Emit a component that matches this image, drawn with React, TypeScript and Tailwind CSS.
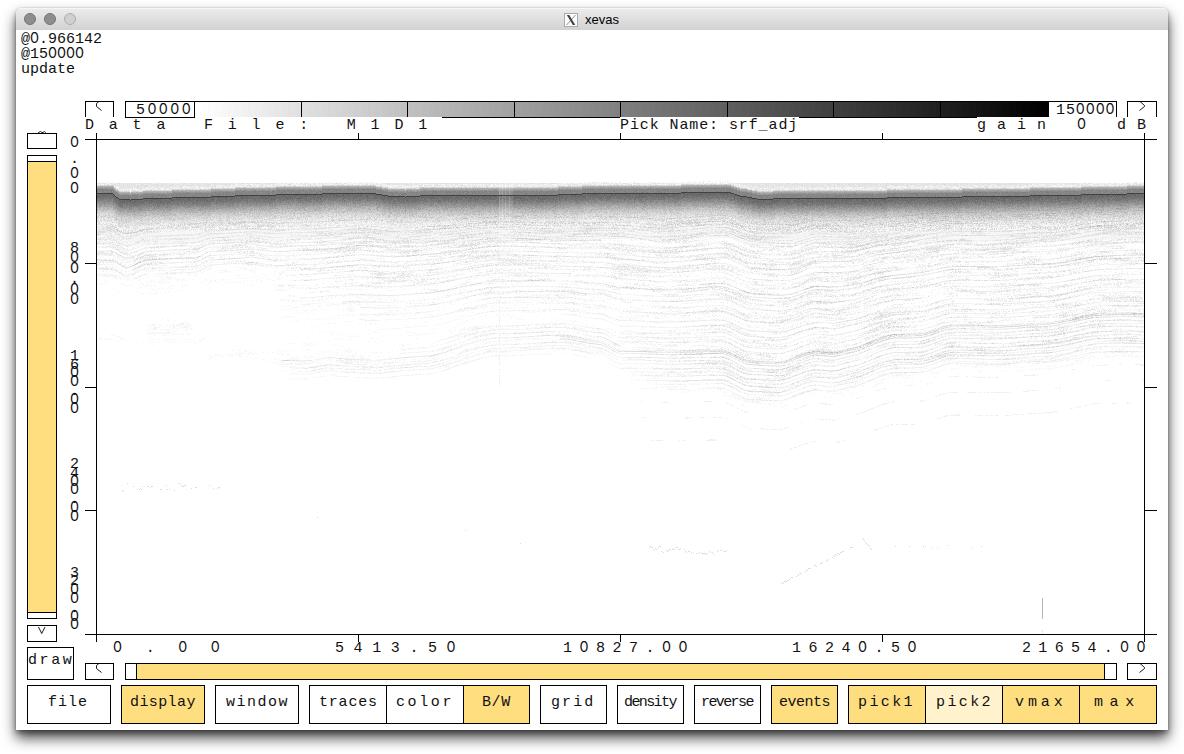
import React from "react";

type Pt = [number, number];

/* ---------- deterministic noise ---------- */
function hash(a: number, b: number): number {
  let h = (Math.imul(a | 0, 374761393) + Math.imul(b | 0, 668265263)) | 0;
  h = Math.imul(h ^ (h >>> 13), 1274126177);
  h ^= h >>> 16;
  return (h >>> 0) / 4294967296;
}
function noise(x: number, y: number): number {
  const xi = Math.floor(x);
  const yi = Math.floor(y);
  const fx = x - xi;
  const fy = y - yi;
  const a = hash(xi, yi) * (1 - fx) + hash(xi + 1, yi) * fx;
  const b = hash(xi, yi + 1) * (1 - fx) + hash(xi + 1, yi + 1) * fx;
  return a * (1 - fy) + b * fy;
}
function curve(points: Pt[], x: number): number {
  if (x <= points[0][0]) return points[0][1];
  for (let i = 1; i < points.length; i++) {
    if (x <= points[i][0]) {
      const [x0, y0] = points[i - 1];
      const [x1, y1] = points[i];
      const f = (x - x0) / (x1 - x0);
      return y0 + (y1 - y0) * f * f * (3 - 2 * f) * 0.5 + (y1 - y0) * f * 0.5;
    }
  }
  return points[points.length - 1][1];
}
const clamp = (v: number) => Math.max(0, Math.min(1, v));

/* ---------- reflectors ---------- */
const seabed: Pt[] = [
  [97, 193.4], [111, 193], [119, 198.6], [130, 199.5], [150, 198], [200, 196.8], [250, 195], [300, 194],
  [350, 192.8], [368, 192.6], [395, 196.3], [405, 196.5], [425, 195.2], [500, 195], [552, 195], [562, 194],
  [612, 192.6], [665, 193.4], [690, 192], [727, 191.6], [742, 196], [762, 199.2], [775, 198.4], [835, 198],
  [900, 197.4], [1000, 196], [1080, 194.5], [1144, 193.2],
];
const middle: Pt[] = [
  [97, 260], [112, 260], [126, 267], [146, 259], [195, 258], [210, 251], [252, 248], [276, 251.5], [310, 250],
  [360, 244.5], [394, 248], [496, 238], [610, 240], [660, 243], [724, 239], [752, 248], [790, 250], [815, 243],
  [850, 243], [880, 236], [960, 227], [1050, 225], [1100, 217], [1144, 216],
];
const deep: Pt[] = [
  [97, 366], [128, 371], [190, 367], [218, 352], [252, 352], [282, 360], [306, 361], [330, 357], [377, 360],
  [428, 355], [496, 337], [565, 335], [600, 340], [620, 350], [722, 350], [748, 360], [780, 362], [815, 351],
  [833, 352], [850, 348], [895, 334], [920, 333], [950, 325], [985, 325], [1045, 323], [1095, 313], [1144, 313],
];
/* [level between reflectors, strength, first x, last x] */
const horizons: [number, number, number, number][] = [
  [0.5, 0.05, 97, 1144], [0.62, 0.05, 97, 1144], [0.68, 0.06, 97, 1144], [0.75, 0.05, 97, 1144],
  [0.8, 0.04, 97, 1144], [0.86, 0.06, 97, 1144], [0.92, 0.04, 97, 1144],
  [1, 0.1, 97, 600], [1.04, 0.05, 97, 1144], [1.08, 0.07, 97, 1144], [1.13, 0.05, 97, 1144],
  [1.17, 0.08, 300, 1144], [1.22, 0.05, 300, 1144], [1.27, 0.06, 300, 1144], [1.35, 0.05, 300, 1144],
  [1.4, 0.11, 700, 1144], [1.43, 0.08, 300, 1144], [1.49, 0.05, 300, 1144], [1.54, 0.07, 360, 1144],
  [1.6, 0.05, 360, 1144], [1.65, 0.06, 360, 1144], [1.73, 0.07, 380, 1144], [1.78, 0.07, 560, 1144],
  [1.84, 0.06, 620, 1144], [1.88, 0.06, 390, 1144],
  [1.92, 0.06, 400, 1144], [1.96, 0.07, 400, 620], [2, 0.12, 282, 1144], [2.025, 0.12, 560, 1144],
  [2.06, 0.1, 560, 1144], [2.12, 0.07, 290, 1144], [2.17, 0.06, 290, 1144], [2.22, 0.08, 290, 1144],
  [2.3, 0.08, 290, 1144], [2.36, 0.06, 630, 1144], [2.42, 0.09, 630, 1144], [2.46, 0.07, 850, 1144],
  [2.5, 0.1, 630, 1144], [2.56, 0.06, 630, 1144], [2.64, 0.08, 630, 1144],
];

function envelope(x: number, y: number, seg: number): number {
  const left = clamp((285 - x) / 14);
  const right = clamp((x - 600) / 130);
  const mid = 1 - left - right;
  let l = clamp((305 - y) / 50) * 0.9;
  if (x > 140 && x < 200) l += 0.55 * clamp(1 - Math.abs(y - 325) / 12) * clamp((200 - x) / 12) * clamp((x - 140) / 12);
  l += 0.42 * clamp(1 - Math.abs(seg - (x > 205 ? 2.02 : 1.75)) / 0.14);
  let m = clamp((342 - y) / 62) * 0.9;
  m += 0.6 * clamp(1 - Math.abs(seg - 2.08) / 0.38);
  const r = seg < 2.45 ? 0.95 : 0.95 * clamp((2.9 - seg) / 0.45);
  return clamp(l) * left + clamp(m) * Math.max(0, mid) + r * right;
}

function buildSection(): { fill: string; d: string }[] {
  const levels: string[][] = Array.from({ length: 32 }, () => []);
  const width = 1047;
  const top = 181;
  const bottom = 450;
  const s: number[] = [];
  const m: number[] = [];
  const d: number[] = [];
  for (let i = 0; i < width; i++) {
    const x = 97 + i;
    s.push(curve(seabed, x));
    m.push(curve(middle, x) + 0.6 * Math.sin(x / 17));
    d.push(curve(deep, x) + 0.5 * Math.sin(x / 13));
  }
  for (let y = top; y < bottom; y++) {
    let start = 0;
    let current = -1;
    for (let i = 0; i <= width; i++) {
      let level = -1;
      if (i < width) {
        const x = 97 + i;
        const dy = y - Math.round(s[i]);
        const grain = hash(i, y) - 0.5;
        let dark = 0;
        if (dy < 0) {
          if (dy >= -7) dark = 0.3 + 0.18 * clamp((dy + 7) / 3) + grain * 0.05;
          else if (y >= 183) {
            if (dy === -8) dark = 0.16 + grain * 0.12;
            else dark = 0.1 + grain * 0.05;
            if (dy >= -11 && dy < -8) dark = 0.07 + grain * 0.1;
          } else dark = dy > -12 && grain > 0.15 ? 0.06 : 0;
        } else if (dy === 0) {
          dark = 0.74;
        } else {
          const edge = 0.44 * Math.exp(-Math.pow(dy / 15, 2)) + 0.15 * Math.exp(-Math.pow(dy / 29, 1.8));
          dark = edge + grain * (dy < 34 ? 0.09 : 0);
          const seg =
            y < m[i] ? (y - s[i]) / (m[i] - s[i]) : y < d[i] ? 1 + (y - m[i]) / (d[i] - m[i]) : 2 + (y - d[i]) / 60;
          const depth = seg < 1 ? seg * 55 : seg < 2 ? 55 + (seg - 1) * 105 : 160 + (seg - 2) * 60;
          const env = envelope(x, y, seg);
          const streak = noise(i / 14, depth * 0.85);
          const coarse = noise(i / 60 + 90, depth * 0.16 + 40);
          const shallow = 0.012 + 0.014 * clamp((75 - dy) / 30);
          const tex = (streak * 0.7 + coarse * 0.3 - 0.54) * 0.25 + grain * 0.13 + shallow;
          const fade = clamp((dy - 8) / 30);
          dark += Math.min(0.12, Math.max(0, tex)) * env * fade;
          for (const [at, strength, x0, x1] of horizons) {
            if (x < x0 || x > x1 || env < 0.08) continue;
            const scale = seg < 1 ? 55 : seg < 2 ? 105 : 60;
            const dist = Math.abs(seg - at) * scale;
            if (dist < 0.8) dark += strength * (1.1 - dist) * clamp(env * 1.4) * (0.4 + noise(i / 22, at * 80)) * (1 + grain * 0.6);
          }
          if (seg > 2.7 && x > 640) {
            for (const k of [2.86, 3.12, 3.5, 4.3]) {
              if (k > 4 && x < 940) continue;
              if (Math.abs(seg - k) * 60 < 0.55 && noise(i / 8, k * 9) > 0.5 && grain > -0.15) dark += 0.05;
            }
          }
          if (dy > 45 && dark < 0.022) dark = 0;
        }
        if (x >= 499 && x <= 512 && dy !== 0) {
          if (x === 499 || x === 502 || x === 505 || x === 509) dark *= 0.76;
          else dark *= 0.9;
          if (x === 499 && y > 290 && y < 385 && hash(i, y) > 0.45) dark = 0.05;
        }
        level = Math.round(clamp(dark) * 31);
      }
      if (level !== current) {
        if (current > 0) levels[current].push(`M${start} ${y - 138.5}h${i - start}`);
        start = i;
        current = level;
      }
    }
  }
  return levels
    .map((runs, i) => {
      const g = Math.round(255 - (i * 255) / 31);
      return { fill: `rgb(${g},${g},${g})`, d: runs.join("") };
    })
    .filter((l) => l.d.length > 0);
}
const section = buildSection();

function buildSpecks(): string {
  const out: string[] = [];
  const put = (x: number, y: number) => out.push(`M${Math.round(x) - 97} ${Math.round(y) - 138.5}h1`);
  for (let i = 0; i < 100; i++) if (hash(i, 901) > 0.6) put(122 + i, 482 + hash(Math.floor(i / 5), 902) * 8 + hash(i, 912) * 2);
  for (let i = 0; i < 78; i++) if (hash(i, 903) > 0.3) put(649 + i, 545 + i * 0.05 + hash(Math.floor(i / 4), 904) * 5 + hash(i, 914) * 2);
  for (let i = 0; i < 75; i++) if (hash(Math.floor(i / 3), 905) > 0.45) put(781 + i, 582 - i * 0.52 + hash(i, 906) * 2);
  for (let i = 0; i < 10; i++) put(862 + i, 538 + i * 1.2);
  for (let i = 0; i < 120; i++) if (hash(i, 907) > 0.93) put(870 + i, 545 + hash(i, 908) * 3);
  put(317, 517);
  put(465, 530);
  put(520, 543);
  return out.join("");
}
const specks = buildSpecks();

/* ---------- text ---------- */
function Mono({ text }: { text: string }) {
  return (
    <>
      {text.split(/(0)/).map((part, i) =>
        part === "0" ? (
          <span key={i} className="font-['Inter'] text-[14.3px] leading-[0px] font-normal">
            0
          </span>
        ) : (
          part
        ),
      )}
    </>
  );
}

const arrows = {
  left: "M14.5 0L11.5 2.5V5.5L16.5 9.5",
  right: "M12.5 0L17.5 4.5V5.5L12.5 9.5",
};
function Arrow({ dir, open }: { dir: "left" | "right"; open?: boolean }) {
  return (
    <div className={`border-black bg-white ${open ? "h-4 border-x border-t" : "h-[17px] border"} ${dir === "left" ? "w-[29px]" : "w-[30px]"}`}>
      <svg viewBox="0 0 28 15" className="-mt-px -ml-px block h-[15px] w-[28px]">
        <path d={arrows[dir]} fill="none" stroke="#000" strokeWidth="0.9" />
      </svg>
    </div>
  );
}

const groups: { label: string; box: string; text: string }[][] = [
  [{ label: "file", box: "w-[84px] bg-white", text: "pl-[20px] tracking-[1px]" }],
  [{ label: "display", box: "w-[84px] bg-[#ffde80]", text: "pl-[8px] tracking-[0.4px]" }],
  [{ label: "window", box: "w-[84px] bg-white", text: "pl-[10px] tracking-[1.5px]" }],
  [
    { label: "traces", box: "w-[78px] bg-white", text: "pl-[9px] tracking-[0.8px]" },
    { label: "color", box: "w-[78px] bg-white", text: "pl-[9px] tracking-[2.6px]" },
    { label: "B/W", box: "w-[67px] bg-[#ffde80]", text: "pl-[18px] tracking-[0.6px]" },
  ],
  [{ label: "grid", box: "w-[67px] bg-white", text: "pl-[10px] tracking-[2.1px]" }],
  [{ label: "density", box: "w-[67px] bg-white", text: "pl-[6px] tracking-[-1.6px]" }],
  [{ label: "reverse", box: "w-[67px] bg-white", text: "pl-[6px] tracking-[-1.6px]" }],
  [{ label: "events", box: "w-[67px] bg-[#ffde80]", text: "pl-[7px] tracking-[-0.5px]" }],
  [
    { label: "pick1", box: "w-[78px] bg-[#ffde80]", text: "pl-[9px] tracking-[2.4px]" },
    { label: "pick2", box: "w-[78px] bg-[#fff2cc]", text: "pl-[10px] tracking-[2.4px]" },
    { label: "vmax", box: "w-[78px] bg-[#ffde80]", text: "pl-[12px] tracking-[3.9px]" },
    { label: "max", box: "w-[78px] bg-[#ffde80]", text: "pl-[14px] tracking-[6.6px]" },
  ],
];

const yLabels = [
  { text: "0.00", gap: "mt-[3.3px]", cell: "h-[15.4px] leading-[15.4px]" },
  { text: "800.00", gap: "mt-[46.1px]", cell: "h-[10.4px] leading-[10.4px]" },
  { text: "1600.00", gap: "mt-[46.6px]", cell: "h-[8.8px] leading-[8.8px]" },
  { text: "2400.00", gap: "mt-[46.5px]", cell: "h-[8.8px] leading-[8.8px]" },
  { text: "3200.00", gap: "mt-[47px]", cell: "h-[8.8px] leading-[8.8px]" },
];

const xLabels = [
  { text: "0.00", cls: "w-[222px] tracking-[23.6px]" },
  { text: "5413.50", cls: "w-[228px] tracking-[9.6px]" },
  { text: "10827.00", cls: "w-[229px] tracking-[7.5px]" },
  { text: "16240.50", cls: "w-[230px] tracking-[7.5px]" },
  { text: "21654.00", cls: "w-[140px] tracking-[7.35px]" },
];

export default function App() {
  return (
    <div className="h-[754px] w-[1184px] overflow-hidden bg-white pt-2 pl-4 font-['Liberation_Mono',monospace] text-[15px] text-[#111]">
      <div className="flex h-[722px] w-[1152px] flex-col rounded-t-[5px] bg-white shadow-[0_0_1px_rgba(0,0,0,0.5),0_8px_14px_rgba(0,0,0,0.72),0_3px_5px_rgba(0,0,0,0.3)]">
        {/* title bar */}
        <div className="relative flex h-[22px] shrink-0 items-center justify-center rounded-t-[5px] border-t border-[#f6f6f6] bg-linear-to-b from-[#ebebeb] to-[#d2d2d2]">
          <div className="absolute top-1 left-2 flex gap-2">
            <span className="size-3 rounded-full border border-[#747478] bg-[#8e8d92]" />
            <span className="size-3 rounded-full border border-[#747478] bg-[#8e8d92]" />
            <span className="size-3 rounded-full border border-[#aeaeae] bg-[#d0d0d0]" />
          </div>
          <svg viewBox="0 0 14 14" className="mr-[7px] -ml-px h-[14px] w-[14px]">
            <rect x="0.5" y="0.5" width="13" height="13" fill="#fcfcfc" stroke="#aaa" />
            <path d="M11.5 2L2.5 12" stroke="#888" strokeWidth="0.9" />
            <path d="M2.8 2h2.5l6 10H8.8z" fill="#444" />
          </svg>
          <span className="font-['Liberation_Sans',sans-serif] text-[13px] leading-none text-black">xevas</span>
        </div>

        {/* console */}
        <div className="flex h-[71px] shrink-0 flex-col pt-[2px] pl-[5px] leading-[15px]">
          <div className="h-[15px] whitespace-pre"><Mono text="@0.966142" /></div>
          <div className="h-[15px] whitespace-pre"><Mono text="@150000" /></div>
          <div className="h-[15px] whitespace-pre">update</div>
        </div>

        {/* colour scale */}
        <div className="flex h-[17px] shrink-0 pl-[69px]">
          <Arrow dir="left" open />
          <div className="ml-[11px] flex h-[17px] w-[992px]">
            <div className="h-[17px] w-[70px] border border-black pl-[10px] leading-[18px] tracking-[2.4px]">
              <Mono text="50000" />
            </div>
            <div className="relative h-4 w-[853px] border-t border-black">
              <div className="flex h-[15px]">
                {Array.from({ length: 128 }, (_, i) => {
                  const g = Math.round(255 - (i * 255) / 127);
                  return <div key={i} className="h-full flex-1" style={{ backgroundColor: `rgb(${g},${g},${g})` }} />;
                })}
              </div>
              <svg viewBox="0 0 853 17" className="absolute -top-px left-0 h-[17px] w-[853px]" shapeRendering="crispEdges">
                {[301, 407, 514, 620, 727, 833, 940].map((x) => (
                  <rect key={x} x={x - 195} y="0" width="1" height="16" />
                ))}
                <rect x="247" y="16" width="178" height="1" />
                <rect x="604" y="16" width="178" height="1" />
              </svg>
            </div>
            <div className="h-4 w-[69px] border-t border-r border-black pl-[8px] leading-[18px] tracking-[0.9px]">
              <Mono text="150000" />
            </div>
          </div>
          <div className="w-[10px]" />
          <Arrow dir="right" open />
        </div>

        {/* heading */}
        <div className="flex h-[15px] shrink-0 pl-[69px] leading-[16px] whitespace-pre">
          <div className="w-[535px] tracking-[14.8px]">Data File: M1D1</div>
          <div className="w-[357px] tracking-[0.9px]">Pick Name: srf_adj</div>
          <div className="tracking-[11px]"><Mono text="gain 0 dB" /></div>
        </div>

        {/* section */}
        <div className="flex h-[509px] shrink-0 pl-[11px]">
          <div className="flex w-[30px] shrink-0 flex-col">
            <div className="h-4 border border-black">
              <svg viewBox="0 0 28 4" className="-mt-[3px] block h-1 w-7">
                <path d="M10.5 2.5V1.5L12.5 .5L14 1.5H15L16.5 .5L17.5 1.5V2.5" fill="none" stroke="#000" strokeWidth="0.9" />
              </svg>
            </div>
            <div className="mt-[6px] flex h-[464px] flex-col justify-center border border-black">
              <div className="h-[452px] border-y border-black bg-[#ffde80]" />
            </div>
            <div className="mt-[6px] h-[17px] border border-black">
              <svg viewBox="0 0 28 15" className="block h-[15px] w-7">
                <path d="M10.5 1L13.7 7.5L17 1" fill="none" stroke="#000" strokeWidth="0.9" />
              </svg>
            </div>
          </div>
          <div className="flex w-[28px] shrink-0 flex-col pl-[13px]">
            {yLabels.map((l) => (
              <div key={l.text} className={`w-[9px] ${l.gap}`}>
                {l.text.split("").map((c, i) => (
                  <div key={i} className={`overflow-visible ${l.cell}`}>
                    <Mono text={c} />
                  </div>
                ))}
              </div>
            ))}
          </div>
          <svg viewBox="0 0 1073 509" className="block h-[509px] w-[1073px] shrink-0" shapeRendering="crispEdges">
            <g transform="translate(12 6)">
              {section.map((l) => (
                <path key={l.fill} d={l.d} stroke={l.fill} strokeWidth="1" fill="none" />
              ))}
              <path d={specks} stroke="#dcdcdc" strokeWidth="1" fill="none" />
              <path d="M945.5 459v21" stroke="#b5b5b5" strokeWidth="1" />
              <path d="M945.5 491v3" stroke="#e5e5e5" strokeWidth="1" />
            </g>
            <rect x="0" y="6" width="1072" height="1" />
            <rect x="0" y="501" width="1072" height="1" />
            <rect x="11" y="0" width="1" height="509" />
            <rect x="1059" y="0" width="1" height="509" />
            {[130, 254, 377].map((y) => (
              <g key={y}>
                <rect x="0" y={y} width="11" height="1" />
                <rect x="1060" y={y} width="12" height="1" />
              </g>
            ))}
            {[273, 535, 797].map((x) => (
              <g key={x}>
                <rect x={x} y="0" width="1" height="6" />
                <rect x={x} y="501" width="1" height="8" />
              </g>
            ))}
          </svg>
        </div>

        {/* axis labels and scroll bar */}
        <div className="flex h-[43px] shrink-0 pl-[11px]">
          <div className="mt-[5px] h-[33px] w-[47px] shrink-0 border border-black leading-[26px] tracking-[2.6px]">draw</div>
          <div className="ml-[11px] flex flex-col">
            <div className="-mt-[2px] flex h-[23px] pl-[28px] leading-[17px] whitespace-pre">
              {xLabels.map((l) => (
                <div key={l.text} className={`shrink-0 ${l.cls}`}><Mono text={l.text} /></div>
              ))}
            </div>
            <div className="flex h-[17px]">
              <Arrow dir="left" />
              <div className="ml-[11px] flex h-[17px] w-[992px] border border-black pr-[11px] pl-[10px]">
                <div className="w-full border-x border-black bg-[#ffde80]" />
              </div>
              <div className="w-[10px]" />
              <Arrow dir="right" />
            </div>
          </div>
        </div>

        {/* buttons */}
        <div className="flex h-[39px] shrink-0 gap-[10px] pl-[11px]">
          {groups.map((g) => (
            <div key={g[0].label} className="flex">
              {g.map((b, i) => (
                <button key={b.label} className={`h-[39px] shrink-0 border border-black text-left leading-none ${i > 0 ? "-ml-px" : ""} ${b.box}`}>
                  <span className={`block h-[33px] leading-[30px] whitespace-pre ${b.text}`}>{b.label}</span>
                </button>
              ))}
            </div>
          ))}
        </div>
      </div>
    </div>
  );
}
